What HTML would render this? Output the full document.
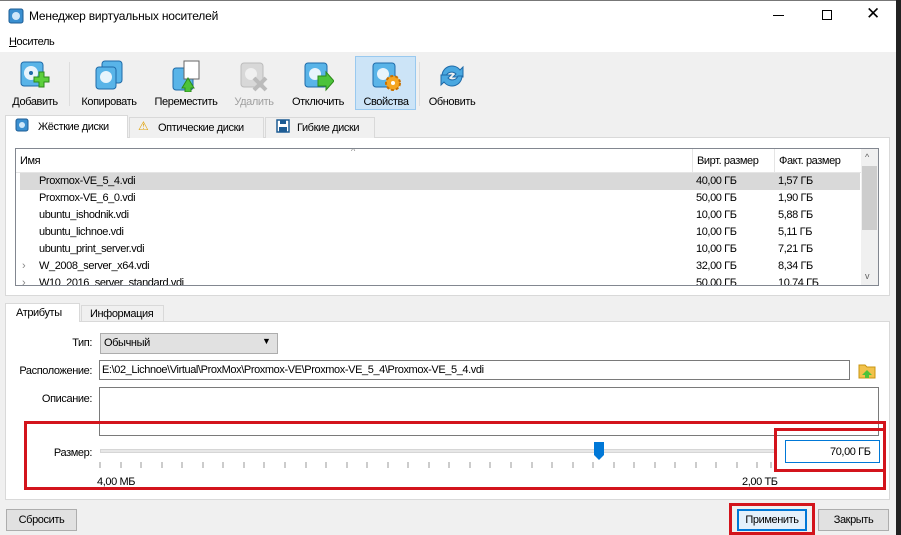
<!DOCTYPE html>
<html><head><meta charset="utf-8">
<style>
*{box-sizing:border-box;margin:0;padding:0}
body{width:901px;height:535px;overflow:hidden;background:#f0f0f0;font-family:"Liberation Sans",sans-serif;font-size:11px;color:#000;position:relative;letter-spacing:-0.4px}
.a{position:absolute}
.ttl{left:0;top:0;width:896px;height:52px;background:#fff}
.lbl{position:absolute;font-size:11px;white-space:nowrap}
.rl{position:absolute;right:809px;font-size:11px;white-space:nowrap;text-align:right}
.tb{position:absolute;top:56px;height:54px;text-align:center}
.tb span{position:absolute;left:0;right:0;top:40px;font-size:11px}
.tb svg{position:absolute;top:4px;left:50%;margin-left:-16px}
.tab{position:absolute;border:1px solid #d9d9d9;border-bottom:none;background:#f0f0f0;height:21px;padding-top:4px}
.btn{position:absolute;height:22px;border:1px solid #adadad;background:#e1e1e1;text-align:center;line-height:20px}
.row{position:absolute;left:20px;width:840px;height:17px;line-height:17px}
.row b{font-weight:normal;position:absolute}
</style></head><body>
<div class="a" style="left:896px;top:0;width:5px;height:535px;background:#222"></div>
<div class="a ttl"></div>
<div class="a" style="left:0;top:0;width:896px;height:1px;background:#777"></div>
<svg class="a" style="left:8px;top:8px" width="16" height="16"><rect x="1" y="1" width="14" height="14" rx="2" fill="#3a8fd0" stroke="#1d5c94"/><circle cx="8" cy="8" r="4" fill="#cfe8fa"/></svg>
<div class="lbl" style="left:29px;top:9px;font-size:12px;letter-spacing:-0.2px">Менеджер виртуальных носителей</div>
<div class="a" style="left:773px;top:15px;width:11px;height:1px;background:#000"></div>
<div class="a" style="left:822px;top:10px;width:10px;height:10px;border:1px solid #000"></div>
<div class="lbl" style="left:866px;top:4px;font-size:17px">✕</div>
<div class="lbl" style="left:9px;top:36px"><u>Н</u>оситель</div>

<div class="a" style="left:355px;top:56px;width:61px;height:54px;background:#cce4f7;border:1px solid #99c9ef"></div>
<div class="a" style="left:69px;top:62px;width:1px;height:44px;background:#ddd"></div>
<div class="a" style="left:419px;top:62px;width:1px;height:44px;background:#ddd"></div>

<div class="tb" style="left:4px;width:62px"><svg width="32" height="32"><rect x="2" y="2" width="22" height="24" rx="3" fill="#59b4e8" stroke="#1e6aa8"/><circle cx="12" cy="13" r="7" fill="#e8f4fc"/><circle cx="12" cy="13" r="2" fill="#1e6aa8"/><path d="M18 14h5v-5h5v5h5v5h-5v5h-5v-5h-5z" fill="#5ccf3c" stroke="#2d8a1a" transform="translate(-3,3)"/></svg><span>Добавить</span></div>
<div class="tb" style="left:75px;width:68px"><svg width="32" height="32"><rect x="9" y="1" width="20" height="22" rx="3" fill="#59b4e8" stroke="#1e6aa8"/><rect x="3" y="7" width="20" height="22" rx="3" fill="#59b4e8" stroke="#1e6aa8"/><circle cx="13" cy="17" r="6" fill="#e8f4fc"/></svg><span>Копировать</span></div>
<div class="tb" style="left:148px;width:76px"><svg width="32" height="32"><rect x="3" y="8" width="20" height="22" rx="3" fill="#59b4e8" stroke="#1e6aa8"/><rect x="14" y="1" width="15" height="18" fill="#fff" stroke="#666"/><path d="M12 28l6-10 6 10h-3v4h-6v-4z" fill="#4cc33a" stroke="#2d8a1a"/></svg><span>Переместить</span></div>
<div class="tb" style="left:226px;width:56px;color:#a0a0a0"><svg width="32" height="32"><rect x="3" y="3" width="22" height="24" rx="3" fill="#d8d8d8" stroke="#bbb"/><circle cx="13" cy="14" r="6" fill="#f0f0f0"/><path d="M16 18l12 12M28 18l-12 12" stroke="#bbb" stroke-width="4"/></svg><span>Удалить</span></div>
<div class="tb" style="left:284px;width:68px"><svg width="32" height="32"><rect x="3" y="3" width="22" height="24" rx="3" fill="#59b4e8" stroke="#1e6aa8"/><circle cx="13" cy="14" r="6" fill="#e8f4fc"/><path d="M16 16l8 0 0-4 8 9-8 9 0-4-8 0z" fill="#4cc33a" stroke="#2d8a1a"/></svg><span>Отключить</span></div>
<div class="tb" style="left:356px;width:60px"><svg width="32" height="32"><rect x="3" y="3" width="22" height="24" rx="3" fill="#59b4e8" stroke="#1e6aa8"/><circle cx="13" cy="14" r="6" fill="#e8f4fc"/><circle cx="23" cy="23" r="7" fill="#f5a623" stroke="#c87000" stroke-width="2" stroke-dasharray="3 2"/><circle cx="23" cy="23" r="2" fill="#fff"/></svg><span>Свойства</span></div>
<div class="tb" style="left:422px;width:60px"><svg width="32" height="32"><path d="M6 16a10 10 0 0 1 18-6l3-3v10h-10l3-3a6 6 0 0 0-10 2z" fill="#4aa8e0" stroke="#1e6aa8"/><path d="M26 16a10 10 0 0 1-18 6l-3 3v-10h10l-3 3a6 6 0 0 0 10-2z" fill="#4aa8e0" stroke="#1e6aa8"/></svg><span>Обновить</span></div>

<div class="a" style="left:5px;top:137px;width:885px;height:159px;background:#fff;border:1px solid #d9d9d9"></div>
<div class="tab" style="left:5px;top:115px;width:123px;height:23px;background:#fff;padding-left:32px;padding-top:5px">Жёсткие диски</div>
<svg class="a" style="left:15px;top:118px" width="14" height="14"><rect x="1" y="1" width="12" height="12" rx="2" fill="#3a8fd0" stroke="#1d5c94"/><circle cx="7" cy="7" r="3" fill="#cfe8fa"/></svg>
<div class="tab" style="left:129px;top:117px;width:135px;padding-left:28px">Оптические диски</div>
<div class="lbl" style="left:138px;top:119px;color:#e0a000;font-size:12px">⚠</div>
<div class="tab" style="left:265px;top:117px;width:110px;padding-left:31px">Гибкие диски</div>
<svg class="a" style="left:276px;top:119px" width="14" height="14"><rect x="1" y="1" width="12" height="12" fill="#fff" stroke="#1d5c94" stroke-width="1.5"/><rect x="4" y="1" width="6" height="4" fill="#1d5c94"/><rect x="3" y="8" width="8" height="5" fill="#1d5c94"/></svg>

<div class="a" style="left:15px;top:148px;width:864px;height:138px;border:1px solid #828790;background:#fff;overflow:hidden">
 <div class="a" style="left:0;top:0;width:845px;height:24px;border-bottom:1px solid #e5e5e5"></div>
 <div class="a" style="left:676px;top:0;width:1px;height:24px;background:#e5e5e5"></div>
 <div class="a" style="left:758px;top:0;width:1px;height:24px;background:#e5e5e5"></div>
 <div class="lbl" style="left:4px;top:6px">Имя</div>
 <div class="lbl" style="left:335px;top:-3px;color:#888;font-size:9px">^</div>
 <div class="lbl" style="left:681px;top:6px">Вирт. размер</div>
 <div class="lbl" style="left:763px;top:6px">Факт. размер</div>
 <div class="a" style="left:845px;top:0;width:17px;height:136px;background:#f0f0f0"></div>
 <div class="a" style="left:846px;top:17px;width:15px;height:64px;background:#cdcdcd"></div>
 <div class="lbl" style="left:849px;top:3px;color:#606060;font-size:9px">^</div>
 <div class="lbl" style="left:849px;top:122px;color:#606060;font-size:9px">v</div>
</div>
<div class="row" style="top:173px;background:#d9d9d9"><b style="left:19px">Proxmox-VE_5_4.vdi</b><b style="left:676px">40,00 ГБ</b><b style="left:758px">1,57 ГБ</b></div>
<div class="row" style="top:190px"><b style="left:19px">Proxmox-VE_6_0.vdi</b><b style="left:676px">50,00 ГБ</b><b style="left:758px">1,90 ГБ</b></div>
<div class="row" style="top:207px"><b style="left:19px">ubuntu_ishodnik.vdi</b><b style="left:676px">10,00 ГБ</b><b style="left:758px">5,88 ГБ</b></div>
<div class="row" style="top:224px"><b style="left:19px">ubuntu_lichnoe.vdi</b><b style="left:676px">10,00 ГБ</b><b style="left:758px">5,11 ГБ</b></div>
<div class="row" style="top:241px"><b style="left:19px">ubuntu_print_server.vdi</b><b style="left:676px">10,00 ГБ</b><b style="left:758px">7,21 ГБ</b></div>
<div class="row" style="top:258px"><b style="left:2px;color:#888">›</b><b style="left:19px">W_2008_server_x64.vdi</b><b style="left:676px">32,00 ГБ</b><b style="left:758px">8,34 ГБ</b></div>
<div class="a" style="left:16px;top:275px;width:844px;height:10px;overflow:hidden"><div class="row" style="left:4px;top:0"><b style="left:2px;color:#888">›</b><b style="left:19px">W10_2016_server_standard.vdi</b><b style="left:676px">50,00 ГБ</b><b style="left:758px">10,74 ГБ</b></div></div>

<div class="a" style="left:5px;top:321px;width:885px;height:179px;background:#fff;border:1px solid #d9d9d9"></div>
<div class="tab" style="left:5px;top:303px;width:75px;height:19px;background:#fff;padding-left:10px;padding-top:3px">Атрибуты</div>
<div class="tab" style="left:81px;top:305px;width:83px;height:16px;padding-left:8px;padding-top:2px">Информация</div>

<div class="rl" style="top:337px">Тип:</div>
<div class="a" style="left:100px;top:333px;width:178px;height:21px;background:#e1e1e1;border:1px solid #adadad"></div>
<div class="lbl" style="left:104px;top:337px">Обычный</div>
<div class="lbl" style="left:262px;top:336px;font-size:9px">▼</div>
<div class="rl" style="top:365px">Расположение:</div>
<div class="a" style="left:99px;top:360px;width:751px;height:20px;border:1px solid #7a7a7a;background:#fff"></div>
<div class="lbl" style="left:102px;top:364px">E:\02_Lichnoe\Virtual\ProxMox\Proxmox-VE\Proxmox-VE_5_4\Proxmox-VE_5_4.vdi</div>
<svg class="a" style="left:858px;top:361px" width="18" height="18"><path d="M1 4h6l2 2h8v11H1z" fill="#f2c24b" stroke="#c89512"/><path d="M9 9l5 5h-3v3H7v-3H4z" fill="#4cc33a"/></svg>
<div class="rl" style="top:393px">Описание:</div>
<div class="a" style="left:99px;top:387px;width:780px;height:49px;border:1px solid #7a7a7a;background:#fff"></div>

<div class="a" style="left:24px;top:421px;width:862px;height:69px;border:3px solid #d3141c"></div>
<div class="rl" style="top:447px">Размер:</div>
<div class="a" style="left:100px;top:449px;width:676px;height:4px;background:#e7e7e7;border:1px solid #d6d6d6"></div>
<svg class="a" style="left:593px;top:441px" width="12" height="20"><path d="M1 1h10v13l-5 5-5-5z" fill="#0078d7"/></svg>
<svg class="a" style="left:95px;top:461px" width="690" height="8"><g stroke="#9a9a9a"><path d="M5 1v6M26 1v6M46 1v6M67 1v6M87 1v6M108 1v6M128 1v6M149 1v6M169 1v6M190 1v6M211 1v6M231 1v6M252 1v6M272 1v6M293 1v6M313 1v6M334 1v6M354 1v6M375 1v6M395 1v6M416 1v6M437 1v6M457 1v6M478 1v6M498 1v6M519 1v6M539 1v6M560 1v6M580 1v6M601 1v6M621 1v6M642 1v6M662 1v6M676 1v6"/></g></svg>
<div class="lbl" style="left:97px;top:476px">4,00 МБ</div>
<div class="lbl" style="left:742px;top:476px">2,00 ТБ</div>
<div class="a" style="left:774px;top:428px;width:112px;height:44px;border:3px solid #d3141c"></div>
<div class="a" style="left:785px;top:440px;width:95px;height:23px;border:1px solid #0078d7;background:#fff"></div>
<div class="lbl" style="left:830px;top:446px">70,00 ГБ</div>

<div class="btn" style="left:6px;top:509px;width:71px">Сбросить</div>
<div class="a" style="left:729px;top:503px;width:86px;height:32px;border:3px solid #d3141c"></div>
<div class="btn" style="left:737px;top:509px;width:70px;border:2px solid #0078d7;background:#e5f1fb;line-height:18px">Применить</div>
<div class="btn" style="left:818px;top:509px;width:71px">Закрыть</div>
</body></html>
